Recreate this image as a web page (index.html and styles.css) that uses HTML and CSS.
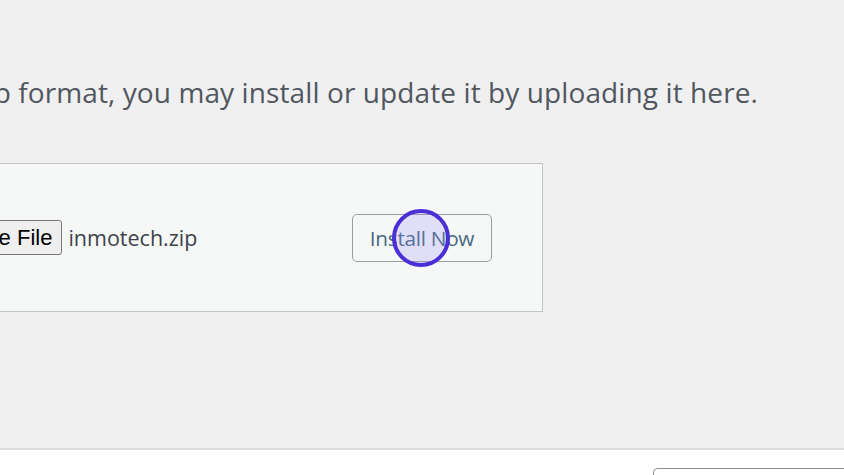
FILE: index.html
```html
<!DOCTYPE html>
<html>

<head>
    <meta charset="utf-8">
    <meta name="viewport" content="width=device-width, initial-scale=1.0">
    <link rel="stylesheet" href="styles.css">
</head>

<body>
    <div id="wrap">
        <div class="intro-row">
            <p class="intro">If you have a plugin in a .zip format, you may install or update it by uploading it here.</p>
        </div>
        <form class="upload-box">
            <div class="file-input">
                <button type="button" class="choose">Choose File</button>
                <span class="file-name">inmotech.zip</span>
            </div>
            <div class="install-wrap">
                <button type="button" class="install">Install Now</button>
                <span class="click-ring"></span>
            </div>
        </form>
    </div>
    <div id="footer">
        <div class="footer-field"></div>
    </div>
</body>

</html>
```

FILE: styles.css
```css
html {
    font-family: "Open Sans", "Noto Sans", sans-serif;
}

body {
    margin: 0;
    width: 844px;
    height: 475px;
    overflow: hidden;
    background-color: #f0f0f1;
    color: #3c434a;
}

#wrap {
    height: 448px;
    overflow: hidden;
}

.intro-row {
    width: 758px;
    display: flex;
    justify-content: flex-end;
    margin-top: 74px;
}

.intro {
    flex-shrink: 0;
    margin: 0;
    font-size: 28px;
    line-height: 36px;
    white-space: nowrap;
    letter-spacing: 0.1px;
    color: #50575e;
}

.upload-box {
    margin: 53px 0 0 -240px;
    width: 783px;
    height: 149px;
    box-sizing: border-box;
    border: 1px solid #c3c4c7;
    background-color: #f6f7f7;
    display: flex;
    align-items: center;
    padding-left: 164px;
}

.file-input {
    width: 427px;
    display: flex;
    align-items: center;
}

.choose {
    font-family: "Liberation Sans", Arial, sans-serif;
    font-size: 22px;
    height: 35px;
    padding: 0 9px;
    color: #000;
    background-color: #efefef;
    border: 1px solid #767676;
    border-radius: 3px;
}

.file-name {
    margin-left: 6px;
    font-size: 21.5px;
    color: #3c434a;
}

.install-wrap {
    position: relative;
}

.install {
    display: block;
    width: 140px;
    height: 48px;
    font-family: "Open Sans", "Noto Sans", sans-serif;
    font-size: 20.8px;
    color: #46697e;
    background-color: #f6f7f7;
    border: 1.5px solid #9a9da1;
    border-radius: 5px;
    letter-spacing: -0.3px;
}

.click-ring {
    position: absolute;
    left: 40px;
    top: -5px;
    width: 50px;
    height: 50px;
    border: 4.5px solid #4a2fd6;
    border-radius: 50%;
    background-color: rgba(150, 140, 255, 0.22);
}

#footer {
    height: 27px;
    background-color: #fff;
    border-top: 2px solid #dcdcde;
}

.footer-field {
    margin: 18px 0 0 653px;
    height: 20px;
    border: 1px solid #8c8f94;
    border-right: none;
    border-radius: 5px 0 0 0;
}
```
